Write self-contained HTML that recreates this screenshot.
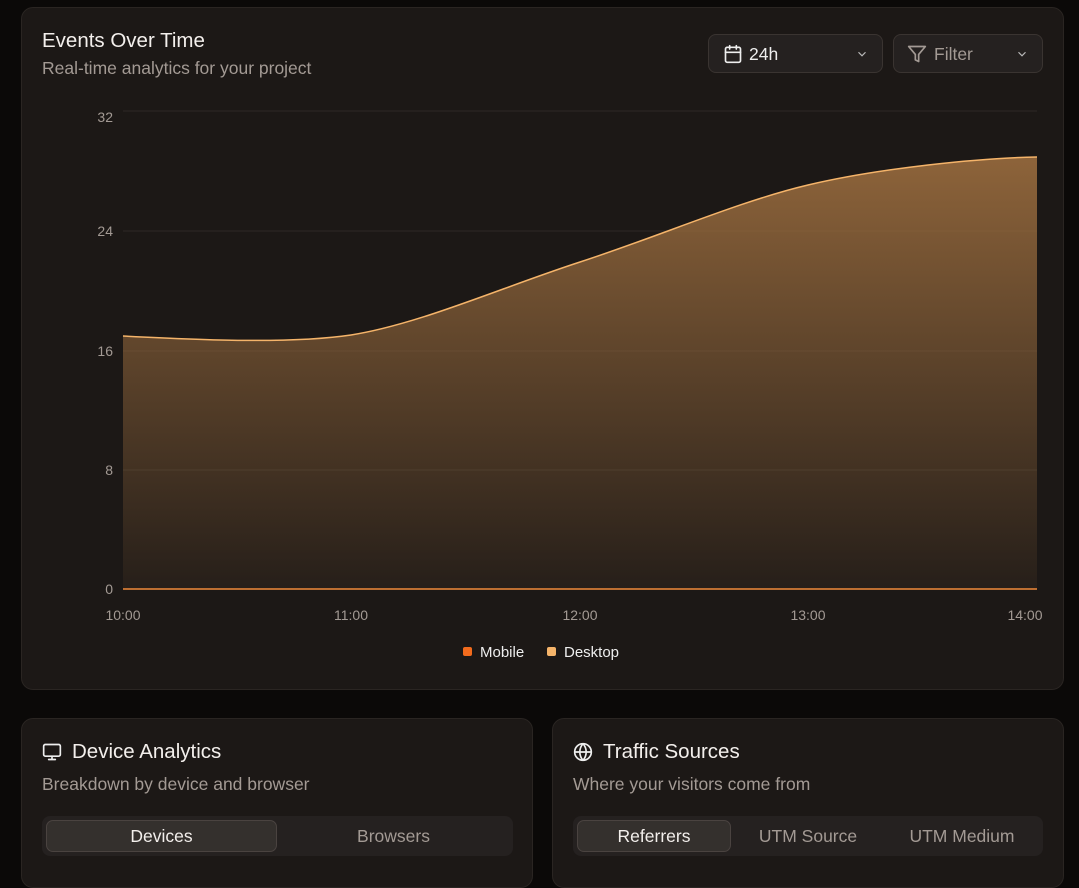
<!DOCTYPE html>
<html><head><meta charset="utf-8"><style>
body{margin:0;background:#0b0908;width:1079px;height:874px;overflow:hidden;font-family:"Liberation Sans",sans-serif;position:relative}
.card{position:absolute;background:#1c1816;border:1px solid #2a2522;border-radius:12px;box-sizing:border-box}
.t{position:absolute;color:#f3efec;font-size:20.5px}
.s{position:absolute;color:#a39a94;font-size:17.5px}
.btn{position:absolute;top:34px;height:39px;border:1px solid #3a3431;border-radius:8px;background:#252120;box-sizing:border-box;color:#eee;font-size:17.5px}
.tabs{position:absolute;top:816px;height:40px;background:#252120;border-radius:8px;box-sizing:border-box}
.tab{position:absolute;top:4px;height:32px;line-height:32px;text-align:center;font-size:17.5px;color:#a39a94;box-sizing:border-box}
.tab.a{background:#34302d;border:1px solid #4a4340;border-radius:7px;color:#f3efec;line-height:30px}
</style></head><body>
<div class="card" style="left:21px;top:7px;width:1043px;height:683px"></div>
<div class="t" style="left:42px;top:29px">Events Over Time</div>
<div class="s" style="left:42px;top:58px">Real-time analytics for your project</div>
<div class="btn" style="left:708px;width:175px">
<svg style="position:absolute;left:14px;top:9px" width="20" height="20" viewBox="0 0 24 24" fill="none" stroke="#eee" stroke-width="2" stroke-linecap="round"><rect x="3" y="4" width="18" height="18" rx="2"/><path d="M16 2v4M8 2v4M3 10h18"/></svg>
<span style="position:absolute;left:40px;top:9px">24h</span>
<svg style="position:absolute;left:146px;top:12px" width="14" height="14" viewBox="0 0 24 24" fill="none" stroke="#bbb" stroke-width="2"><path d="M6 9l6 6 6-6"/></svg></div>
<div class="btn" style="left:893px;width:150px;color:#a39a94">
<svg style="position:absolute;left:13px;top:9px" width="20" height="20" viewBox="0 0 24 24" fill="none" stroke="#a39a94" stroke-width="2" stroke-linejoin="round"><path d="M22 3H2l8 9.5V19l4 2v-8.5z"/></svg>
<span style="position:absolute;left:40px;top:9px">Filter</span>
<svg style="position:absolute;left:121px;top:12px" width="14" height="14" viewBox="0 0 24 24" fill="none" stroke="#bbb" stroke-width="2"><path d="M6 9l6 6 6-6"/></svg></div>
<svg style="position:absolute;left:0;top:0" width="1079" height="700">
<defs><linearGradient id="g" x1="0" y1="0" x2="0" y2="1"><stop offset="0" stop-color="#9a6c3e" stop-opacity="0.9"/><stop offset="1" stop-color="#9a6c3e" stop-opacity="0.08"/></linearGradient></defs>
<g stroke="#2e2926" stroke-width="1"><path d="M123 111H1037M123 231H1037M123 351H1037M123 470H1037"/></g>
<path d="M123 336C200 340 290 344 351 335C420 324 500 288 580 262C660 236 740 201 808 185C880 168 980 158 1037 157V589H123Z" fill="url(#g)"/>
<path d="M123 336C200 340 290 344 351 335C420 324 500 288 580 262C660 236 740 201 808 185C880 168 980 158 1037 157" fill="none" stroke="#f5b46a" stroke-width="1.5"/>
<path d="M123 589H1037" stroke="#f08a3a" stroke-width="1.5"/>
<g fill="#a39a94" font-size="14" font-family="Liberation Sans" text-anchor="end"><text x="113" y="122">32</text><text x="113" y="236">24</text><text x="113" y="356">16</text><text x="113" y="475">8</text><text x="113" y="594">0</text></g>
<g fill="#a39a94" font-size="14" font-family="Liberation Sans" text-anchor="middle"><text x="123" y="620">10:00</text><text x="351" y="620">11:00</text><text x="580" y="620">12:00</text><text x="808" y="620">13:00</text><text x="1025" y="620">14:00</text></g>
<rect x="463" y="647" width="9" height="9" rx="2" fill="#f26b1d"/><text x="480" y="657" fill="#eee" font-size="15" font-family="Liberation Sans">Mobile</text>
<rect x="547" y="647" width="9" height="9" rx="2" fill="#f5b46a"/><text x="564" y="657" fill="#eee" font-size="15" font-family="Liberation Sans">Desktop</text>
</svg>
<div class="card" style="left:21px;top:718px;width:512px;height:170px"></div>
<div class="card" style="left:552px;top:718px;width:512px;height:170px"></div>
<svg style="position:absolute;left:42px;top:742px" width="20" height="20" viewBox="0 0 24 24" fill="none" stroke="#eee" stroke-width="2" stroke-linecap="round"><rect x="2" y="3" width="20" height="14" rx="2"/><path d="M8 21h8M12 17v4"/></svg>
<div class="t" style="left:72px;top:740px">Device Analytics</div>
<div class="s" style="left:42px;top:774px">Breakdown by device and browser</div>
<div class="tabs" style="left:42px;width:471px"><div class="tab a" style="left:4px;width:231px">Devices</div><div class="tab" style="left:236px;width:231px">Browsers</div></div>
<svg style="position:absolute;left:573px;top:742px" width="20" height="20" viewBox="0 0 24 24" fill="none" stroke="#eee" stroke-width="2"><circle cx="12" cy="12" r="10"/><path d="M2 12h20M12 2a15 15 0 0 1 0 20M12 2a15 15 0 0 0 0 20"/></svg>
<div class="t" style="left:603px;top:740px">Traffic Sources</div>
<div class="s" style="left:573px;top:774px">Where your visitors come from</div>
<div class="tabs" style="left:573px;width:470px"><div class="tab a" style="left:4px;width:154px">Referrers</div><div class="tab" style="left:158px;width:154px">UTM Source</div><div class="tab" style="left:312px;width:154px">UTM Medium</div></div>
</body></html>
